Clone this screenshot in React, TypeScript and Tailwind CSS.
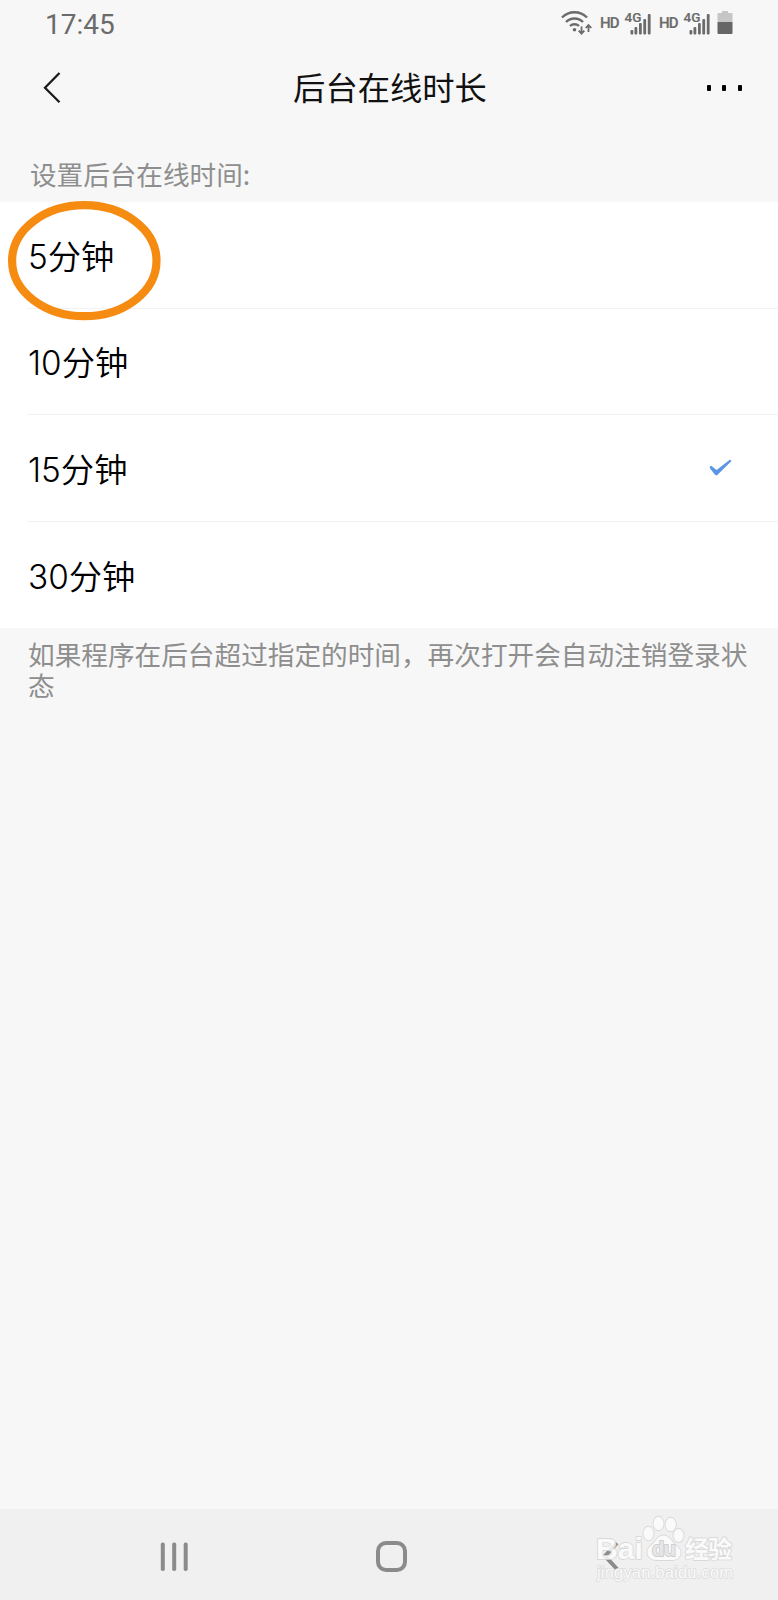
import { useState } from "react";

interface Option {
  minutes: number;
  label: string;
}

const OPTIONS: Option[] = [
  { minutes: 5, label: "5分钟" },
  { minutes: 10, label: "10分钟" },
  { minutes: 15, label: "15分钟" },
  { minutes: 30, label: "30分钟" },
];

const App = () => {
  const [selected, setSelected] = useState(15);

  return (
    <div className="relative flex h-[1600px] w-[778px] flex-col overflow-hidden bg-[#f7f7f7] font-['Noto_Sans_CJK_SC',sans-serif]">
      <StatusBar />
      <Header />
      <main className="flex flex-1 flex-col">
        <p className="mt-[25px] h-[49px] pl-[30px] text-[26.6px] leading-[42px] text-[#8e8e8e]">
          设置后台在线时间:
        </p>
        <ul className="bg-white">
          {OPTIONS.map((option, index) => (
            <li key={option.minutes} className="relative pl-[27px]">
              <button
                onClick={() => setSelected(option.minutes)}
                className={`flex h-[106.5px] w-full items-center justify-between pr-[46px] text-left ${
                  index < OPTIONS.length - 1 ? "border-b border-[#f2f2f2]" : ""
                }`}
              >
                <span className="pt-[4px] pl-[1px] font-[Inter,'Noto_Sans_CJK_SC',sans-serif] text-[33.3px] leading-[48px] font-[350] text-black">
                  {option.label}
                </span>
                {selected === option.minutes && <CheckIcon />}
              </button>
              {index === 0 && <Highlight />}
            </li>
          ))}
        </ul>
        <p className="pt-[13px] pl-[28px] font-['Liberation_Sans','Noto_Sans_CJK_SC',sans-serif] text-[26.65px] leading-[31px] text-[#8e8e8e]">
          如果程序在后台超过指定的时间，再次打开会自动注销登录状
          <br />态
        </p>
      </main>
      <NavBar />
    </div>
  );
};

export default App;

const StatusBar = () => (
  <div className="flex h-12 items-center justify-between pr-[45px] pl-[45px] font-[Roboto,sans-serif] text-[#6b6b6b]">
    <span className="pt-[1px] text-[28px] leading-[48px]">17:45</span>
    <div className="flex items-center pb-[2px]">
      <WifiIcon />
      <Signal />
      <Signal />
      <BatteryIcon />
    </div>
  </div>
);

const Header = () => (
  <header className="flex h-20 items-center justify-between pr-[36px] pl-[43px]">
    <svg width="20" height="34" viewBox="0 0 20 34" fill="none">
      <path d="M16.5 2L2 16.7l14.5 14.5" stroke="#1c1c1c" strokeWidth="2.3" />
    </svg>
    <h1 className="pb-[4px] pl-[10px] text-[32.3px] leading-[48px] text-[#111]">
      后台在线时长
    </h1>
    <div className="flex gap-[11.5px]">
      <span className="h-[6px] w-1 rounded-[1px] bg-black" />
      <span className="h-[6px] w-1 rounded-[1px] bg-black" />
      <span className="h-[6px] w-1 rounded-[1px] bg-black" />
    </div>
  </header>
);

const WifiIcon = () => (
  <svg
    className="mr-[8px]"
    width="31"
    height="26"
    viewBox="0 0 31 26"
    fill="none"
    stroke="#6b6b6b"
    strokeWidth="2.4"
  >
    <path d="M1 7.5a17.5 17.5 0 0 1 25 0M5 12a12 12 0 0 1 17 0M9 16a6.5 6.5 0 0 1 9 0" />
    <circle cx="13.5" cy="19.7" r="1.8" fill="#6b6b6b" stroke="none" />
    <path d="M20.5 16.5v7M17.7 20.7l2.8 3 2.8-3M27.5 22v-7M24.7 18l2.8-3 2.8 3" strokeWidth="1.8" />
  </svg>
);

const Signal = () => (
  <svg className="mr-[7.5px]" width="51" height="26" viewBox="0 0 51 26" fill="#6b6b6b">
    <text x="0" y="18.3" fontSize="15" fontWeight="500" textLength="19.5" stroke="#6b6b6b" strokeWidth=".2">
      HD
    </text>
    <text x="24.5" y="12.3" fontSize="13.5" fontWeight="500" textLength="17" stroke="#6b6b6b" strokeWidth=".2">
      4G
    </text>
    <rect x="30.5" y="20" width="2.8" height="4.5" rx="1" />
    <rect x="34.5" y="17" width="2.8" height="7.5" rx="1" />
    <rect x="39" y="13" width="2.8" height="11.5" rx="1" />
    <rect x="43.3" y="9" width="2.8" height="15.5" rx="1" />
    <rect x="47.8" y="4" width="2.8" height="20.5" rx="1" />
  </svg>
);

const BatteryIcon = () => (
  <svg width="16" height="24" viewBox="0 0 16 24">
    <path d="M5 0h6v2h3.5a1 1 0 0 1 1 1v8H.5V3a1 1 0 0 1 1-1H5z" fill="#c6c6c6" />
    <path d="M.5 11h15v11a1 1 0 0 1-1 1h-13a1 1 0 0 1-1-1z" fill="#666" />
  </svg>
);

const CheckIcon = () => (
  <svg width="23" height="17" viewBox="0 0 23 17">
    <path
      d="M2.2 6.7L7.6 11L20.8.7Q22.5.6 22.3 2.3L8.3 16Q7.2 16.8 6 15.7L.7 9Q.5 7 2.2 6.7z"
      fill="#5a96e3"
    />
  </svg>
);

const Highlight = () => (
  <svg
    className="pointer-events-none absolute -top-[1px] left-[8px] z-10"
    width="153"
    height="120"
    viewBox="0 0 153 120"
    fill="none"
  >
    <ellipse cx="76.3" cy="59.7" rx="72.2" ry="55.5" stroke="#f68b12" strokeWidth="8.2" />
  </svg>
);

const NavBar = () => (
  <nav className="relative flex h-[91px] items-center bg-[#f0f0f0] pt-[3px] pl-[160px]">
    <svg width="28" height="29" viewBox="0 0 28 29" fill="#8b8b8b">
      <rect x="0.8" y="0.5" width="4" height="28.5" rx="1.8" />
      <rect x="12.2" y="0.5" width="4" height="28.5" rx="1.8" />
      <rect x="23.7" y="0.5" width="4" height="28.5" rx="1.8" />
    </svg>
    <div className="ml-[188px] h-[31px] w-[31px] rounded-[10px] border-4 border-[#8b8b8b]" />
    <svg className="ml-[194px]" width="18" height="32" viewBox="0 0 18 32" fill="none">
      <path d="M16 3L4 16L16 29" stroke="#8b8b8b" strokeWidth="4" />
    </svg>
    <Watermark />
  </nav>
);

const Watermark = () => (
  <svg
    className="absolute top-[6px] left-[593px]"
    width="145"
    height="76"
    viewBox="0 0 145 76"
    fill="#fcfcfc"
    stroke="#d6d6d6"
    strokeWidth="1.8"
    strokeLinejoin="round"
    paintOrder="stroke"
  >
    <g opacity="0.85">
      <text
        x="3"
        y="43.5"
        fontFamily="Liberation Sans, sans-serif"
        fontWeight="700"
        fontSize="30"
        textLength="47"
        lengthAdjust="spacingAndGlyphs"
      >
        Bai
      </text>
      <ellipse cx="55.5" cy="18.5" rx="5" ry="6.8" />
      <ellipse cx="65.5" cy="8.5" rx="5" ry="6.8" />
      <ellipse cx="77.7" cy="9.5" rx="5.2" ry="6.8" />
      <ellipse cx="85.5" cy="20.5" rx="5" ry="6.5" />
      <path d="M70.5 20.500c5 0 7 4 10 7.500 3 3.500 7 5 7 9.500 0 5-3.500 7.500-8 7.500H63c-5 0-8.500-3-8.500-8 0-4.500 4-6.500 7-10 3-3.500 4.500-6.500 9-6.500z" />
      <text
        x="59"
        y="40.5"
        fontFamily="Liberation Sans, sans-serif"
        fontSize="20"
        fontWeight="700"
        textLength="24"
        fill="#e6e6e6"
        stroke="#c8c8c8"
      >
        du
      </text>
      <text
        x="92"
        y="42.5"
        fontFamily="Noto Sans CJK SC, sans-serif"
        fontWeight="700"
        fontSize="24"
        textLength="47"
      >
        经验
      </text>
    </g>
    <text
      x="4"
      y="63"
      fontFamily="Liberation Sans, sans-serif"
      fontSize="16.5"
      textLength="136"
      strokeWidth="1.6"
      stroke="#d9d9d9"
      opacity="0.85"
    >
      jingyan.baidu.com
    </text>
  </svg>
);
